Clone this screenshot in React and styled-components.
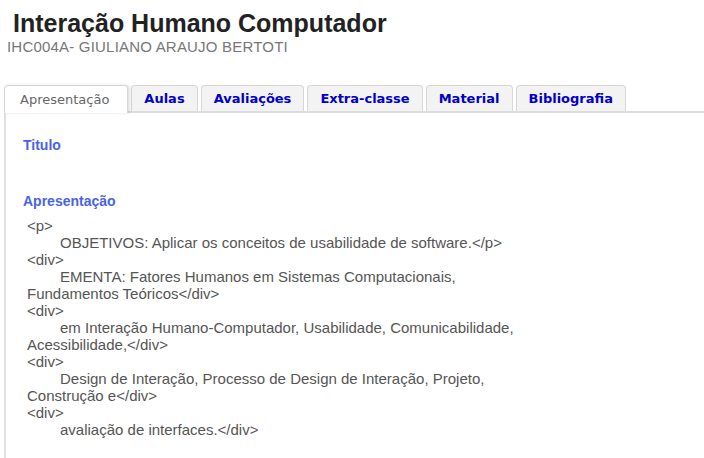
import React from "react";
import styled, { createGlobalStyle } from "styled-components";

const Global = createGlobalStyle`
  html, body { margin: 0; padding: 0; background: #fff; }
  body { font-family: "Liberation Sans", Arial, sans-serif; overflow: hidden; }
`;

const Page = styled.div`
  width: 704px;
  height: 458px;
  overflow: hidden;
  background: #fff;
`;

const Header = styled.header`
  display: flex;
  flex-direction: column;
  padding: 8px 0 0 7px;
`;

const Title = styled.h1`
  margin: 0 0 0 6px;
  font-size: 25px;
  line-height: 30px;
  font-weight: bold;
  color: #222;
`;

const Subtitle = styled.div`
  font-size: 15px;
  line-height: 17px;
  color: #777;
  letter-spacing: 0.2px;
`;

const TabBar = styled.nav`
  display: flex;
  align-items: flex-end;
  gap: 3px;
  margin: 30px 0 0 4px;
  border-bottom: 2px solid #dcdcdc;
`;

const Tab = styled.div`
  position: relative;
  height: ${(p) => (p.$active ? "28px" : "26px")};
  margin-bottom: ${(p) => (p.$active ? "-2px" : "0")};
  display: flex;
  align-items: center;
  padding: ${(p) => (p.$active ? "0 18px 0 15px" : "0 12px 0 12px")};
  box-sizing: border-box;
  border: 1px solid #d6d6d6;
  border-bottom: none;
  border-radius: 4px 4px 0 0;
  background: ${(p) => (p.$active ? "#fff" : "#f3f3f3")};
  color: ${(p) => (p.$active ? "#666" : "#0000cc")};
  font-family: "DejaVu Sans", Verdana, sans-serif;
  font-size: 13px;
  font-weight: ${(p) => (p.$active ? "normal" : "bold")};
  white-space: nowrap;
  z-index: ${(p) => (p.$active ? 2 : 1)};
  box-shadow: ${(p) => (p.$active ? "2px 0 3px rgba(0,0,0,0.12)" : "none")};
`;

const Panel = styled.section`
  margin-left: 4px;
  border-left: 2px solid #e0e0e0;
  padding: 24px 0 0 17px;
  height: 400px;
`;

const Heading = styled.h3`
  margin: 0;
  font-size: 14px;
  line-height: 17px;
  font-weight: bold;
  color: #4a63e6;
`;

const Spacer = styled.div`
  height: ${(p) => p.$h}px;
`;

const Code = styled.div`
  margin: 7px 0 0 4px;
  width: 505px;
  font-size: 15px;
  line-height: 17px;
  color: #555;
`;

const Line = styled.div`
  text-indent: ${(p) => (p.$indent ? "33px" : "0")};
`;

const tabs = ["Apresentação", "Aulas", "Avaliações", "Extra-classe", "Material", "Bibliografia"];

const lines = [
  ["<p>", false],
  ["OBJETIVOS: Aplicar os conceitos de usabilidade de software.</p>", true],
  ["<div>", false],
  ["EMENTA: Fatores Humanos em Sistemas Computacionais, Fundamentos Teóricos</div>", true],
  ["<div>", false],
  ["em Interação Humano-Computador, Usabilidade, Comunicabilidade, Acessibilidade,</div>", true],
  ["<div>", false],
  ["Design de Interação, Processo de Design de Interação, Projeto, Construção e</div>", true],
  ["<div>", false],
  ["avaliação de interfaces.</div>", true],
];

export default function App() {
  return (
    <Page>
      <Global />
      <Header>
        <Title>Interação Humano Computador</Title>
        <Subtitle>IHC004A- GIULIANO ARAUJO BERTOTI</Subtitle>
      </Header>
      <TabBar>
        {tabs.map((t, i) => (
          <Tab key={t} $active={i === 0}>{t}</Tab>
        ))}
      </TabBar>
      <Panel>
        <Heading>Titulo</Heading>
        <Spacer $h={39} />
        <Heading>Apresentação</Heading>
        <Code>
          {lines.map(([txt, ind], i) => (
            <Line key={i} $indent={ind}>{txt}</Line>
          ))}
        </Code>
      </Panel>
    </Page>
  );
}
